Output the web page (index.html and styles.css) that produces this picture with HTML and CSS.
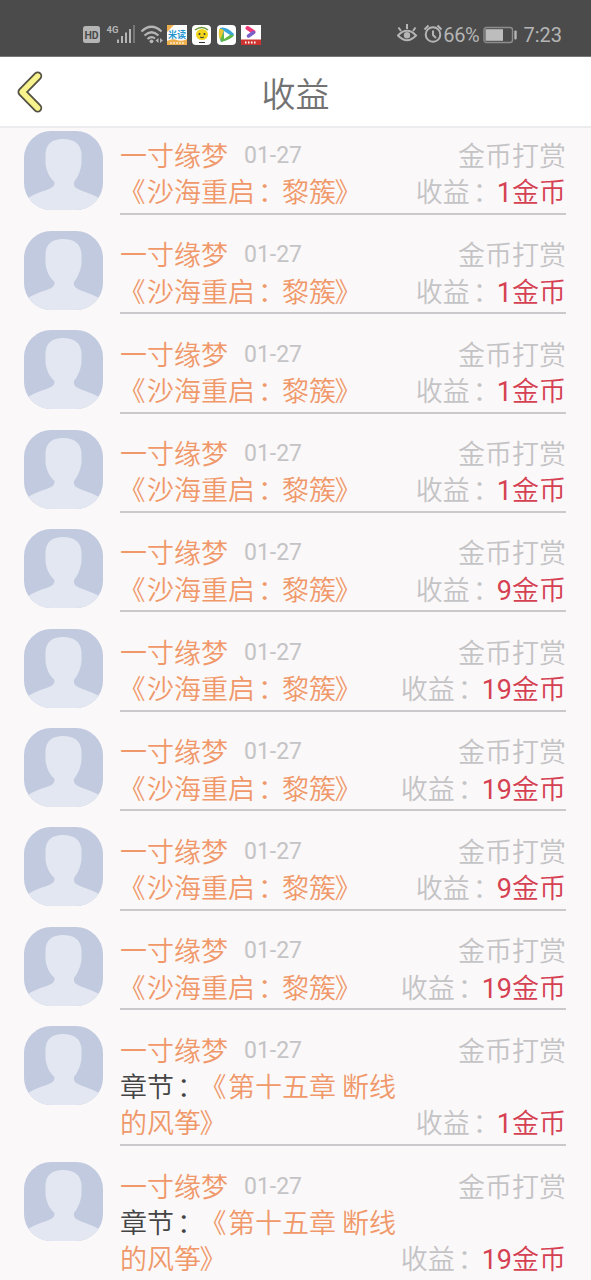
FILE: index.html
```
<!DOCTYPE html>
<html lang="zh-CN">
<head>
<meta charset="utf-8">
<title>收益</title>
<link rel="stylesheet" href="styles.css">
</head>
<body>
<svg class="defs" aria-hidden="true">
  <symbol id="avatar" viewBox="0 0 79 79">
    <rect width="79" height="79" fill="#c2cadf"/>
    <path d="M0 70.500C6 64 17 61 25 58Q31 56 30.500 51C25 46 22 39 21.500 32V23C22 13 28 8 39 8C50 8 57 13 57.500 23V32C57 39 54 46 50 51Q49 56 54 58C62 62 73 64 79 70.500V79H0Z" fill="#e3e7f1"/>
  </symbol>
</svg>

<div class="status">
  <div class="status-left">
    <svg width="179" height="26" viewBox="0 0 179 26">
      <rect x="0" y="5" width="17" height="17" rx="2.500" fill="#b5b5b5"/>
      <text class="hd" x="8.500" y="17.500" text-anchor="middle">HD</text>
      <text class="net" x="23.500" y="11.500">4G</text>
      <g fill="#b5b5b5">
        <rect x="34" y="18.500" width="2" height="3.500"/>
        <rect x="38" y="15" width="2" height="7"/>
        <rect x="42" y="11.500" width="2" height="10.500"/>
        <rect x="46" y="8" width="2" height="14"/>
        <rect x="50" y="4" width="2" height="18" fill="#777"/>
      </g>
      <g fill="none" stroke="#b5b5b5" stroke-width="2.200">
        <path d="M58.500 10.500Q68.500 1 78.500 10.500M61.500 14.500Q68.500 8 75.500 14.500M64.500 18Q68.500 14.500 72 17.500"/>
      </g>
      <circle cx="68.500" cy="20.300" r="1.900" fill="#b5b5b5"/>
      <path d="M75.500 17v5l-3-2.500zM77 17v5l3-2.500z" fill="#b5b5b5"/>
      <rect x="84" y="4" width="20" height="20" fill="#fff"/>
      <path d="M84 4h7l-7 7zM84 20q5-3 10-1t10-1v6H84z" fill="#eeb04d"/>
      <path d="M87 22h14" stroke="#fff" stroke-width="1" stroke-dasharray="2 1"/>
      <text class="app" x="94" y="17" text-anchor="middle">米读</text>
      <rect x="109" y="4" width="19" height="20" rx="4" fill="#fff"/>
      <path d="M112 9q7-5 13 0" stroke="#6b9937" stroke-width="1.500" fill="none"/>
      <ellipse cx="119" cy="13.500" rx="6" ry="5.500" fill="#f1d51c"/>
      <circle cx="116.500" cy="13" r="1" fill="#333"/><circle cx="121.500" cy="13" r="1" fill="#333"/>
      <path d="M117 16q2 1.500 4 0M116 21.500h6" stroke="#333" fill="none"/>
      <rect x="134" y="4" width="19" height="20" rx="4" fill="#fff"/>
      <path d="M137 7Q143 5 151 13Q151 17 138 21Q135 14 137 7Z" fill="#3aa5d8"/>
      <path d="M137 13L151 14Q149 18 138 21Z" fill="#62b843"/>
      <path d="M136 8q3-1 5 2l-4 9q-2-5-1-11z" fill="#e7c92f"/>
      <path d="M141 10l6 4-6 4z" fill="#fff"/>
      <path d="M158 4h20v20h-20z" fill="#fff"/>
      <path d="M158 18.500h20V24h-20z" fill="#cd342f"/>
      <path d="M164.500 7l6 4" stroke="#ef3977" stroke-width="4" stroke-linecap="round"/>
      <path d="M170.500 11.500l-5 3.500" stroke="#7860c9" stroke-width="3.500" stroke-linecap="round"/>
      <path d="M162 21.500h12" stroke="#fff" stroke-width="2" stroke-dasharray="1.500 1.500"/>
    </svg>
  </div>
  <div class="status-right">
    <svg width="46" height="22" viewBox="0 0 46 22" fill="none" stroke="#b5b5b5" stroke-width="2">
      <path d="M1 12.500Q10 3 19 12.500Q10 22 1 12.500ZM10 6V1M4 8L1.500 4.500M16 8l2.500-3.500"/>
      <circle cx="10" cy="12.300" r="3.200" fill="#b5b5b5" stroke="none"/>
      <circle cx="36" cy="11.500" r="7.300" stroke-width="2"/>
      <path d="M36 7.500v4.500l3 3M27.500 6.500L31.500 2.500M44.500 6.500l-4-4"/>
    </svg>
    <span class="percent">66%</span>
    <svg class="battery" width="35" height="18" viewBox="0 0 35 18">
      <rect x="1" y="1.500" width="28.500" height="15" rx="2.500" fill="none" stroke="#8d8d8d" stroke-width="1.400"/>
      <rect x="2.500" y="3.200" width="17.500" height="11.600" fill="#bdbdbd"/>
      <rect x="31.300" y="4.500" width="2.400" height="9" rx="1" fill="#b5b5b5"/>
    </svg>
    <span>7:23</span>
  </div>
</div>

<header class="header">
  <svg class="back" width="30" height="44" viewBox="0 0 30 44" fill="none" stroke-linecap="round" stroke-linejoin="round">
    <path d="M22.700 6L7 22L22.700 38" stroke="#555142" stroke-width="9"/>
    <path d="M22.700 6L7 22L22.700 38" stroke="#f8f38c" stroke-width="5.400"/>
  </svg>
  <h1 class="title">收益</h1>
</header>

<ul class="list" id="list"></ul>
<script src="app.js"></script>
</body>
</html>
```
FILE: styles.css
```
* { box-sizing: border-box; }
body {
  margin: 0;
  height: 1280px;
  overflow: hidden;
  background: #faf8f9;
  font-family: "Noto Sans CJK SC", sans-serif;
  font-weight: 350;
  text-spacing-trim: space-all;
  display: flex;
  flex-direction: column;
}
.defs { position: absolute; width: 0; height: 0; }
.status {
  flex: none;
  height: 57px;
  padding: 21px 29px 0 83px;
  display: flex;
  justify-content: space-between;
  background: #4b4b4b;
  border-bottom: 1px solid #777;
  color: #b5b5b5;
  font-family: Roboto, sans-serif;
  font-size: 20px;
  font-weight: 400;
}
.hd { font: 700 10.500px Roboto, sans-serif; fill: #4b4b4b; }
.net { font: 700 9.500px Roboto, sans-serif; fill: #b5b5b5; }
.app { font: 700 9px "Noto Sans CJK SC", sans-serif; fill: #2596cf; }
.status-right { display: flex; align-items: center; height: 28px; }
.status-right svg { margin-bottom: 2px; }
.percent { margin-right: 4px; letter-spacing: -.3px; }
.status-right .battery { margin: 0 5px 1px 0; }
.header {
  flex: none;
  height: 71px;
  display: grid;
  grid-template-columns: 60px 1fr 60px;
  align-items: center;
  background: #fff;
  border-bottom: 2px solid #ececee;
}
.back { margin-left: 15px; }
.title {
  margin: 3px 0 0;
  text-align: center;
  font-size: 34px;
  font-weight: 350;
  line-height: 48px;
  color: #727272;
}
.list { list-style: none; margin: 0; padding: 0 25px 0 24.400px; }
.row { display: flex; gap: 15.600px; padding-top: 16.200px; }
.row:first-child { padding-top: 3.400px; }
.avatar { flex: none; width: 79px; height: 79px; margin-right: 1px; border-radius: 27px; }
.body {
  flex: 1;
  height: 83.250px;
  padding-top: 5.300px;
  border-bottom: 2px solid #cbc9cb;
  font-size: 27px;
  line-height: 36.400px;
  color: #c4c3c5;
}
.body.tall { height: 119.800px; }
.line { display: flex; justify-content: space-between; align-items: flex-end; }
.name, .book { color: #f0986a; }
.date {
  margin-left: 16px;
  font-family: Roboto, sans-serif;
  font-size: 23px;
  line-height: 1;
  font-weight: 400;
  vertical-align: 3px;
}
.work { max-width: 290px; color: #444; }
.gain { white-space: nowrap; }
.coins { color: #d54152; }
.num { font-family: Roboto, sans-serif; font-weight: 400; line-height: 1; }
/* optical alignment of full-width punctuation */
.bracket { margin: 0 1.500px 0 -1.500px; }
.colon { margin: 0 -3px 0 3px; }
```
FILE: app.js
```
const book = '《沙海重启：黎簇》';
const chapter = '《第十五章 断线的风筝》';
const records = [
  [book, 1], [book, 1], [book, 1], [book, 1], [book, 9], [book, 19],
  [book, 19], [book, 9], [book, 19], [chapter, 1], [chapter, 19]
];
const punctuate = text => text
  .replace(/[《》]/g, '<span class="bracket">$&</span>')
  .replace(/：/g, '<span class="colon">$&</span>');

document.getElementById('list').innerHTML = records.map(([work, coins]) => `
  <li class="row">
    <svg class="avatar"><use href="#avatar"/></svg>
    <div class="body${work === chapter ? ' tall' : ''}">
      <div class="line">
        <div><span class="name">一寸缘梦</span><span class="date">01-27</span></div>
        <span>金币打赏</span>
      </div>
      <div class="line">
        <div class="work">${work === chapter ? punctuate('章节：') : ''}<span class="book">${punctuate(work)}</span></div>
        <div class="gain">${punctuate('收益：')}<span class="coins"><span class="num">${coins}</span>金币</span></div>
      </div>
    </div>
  </li>`).join('');
```
